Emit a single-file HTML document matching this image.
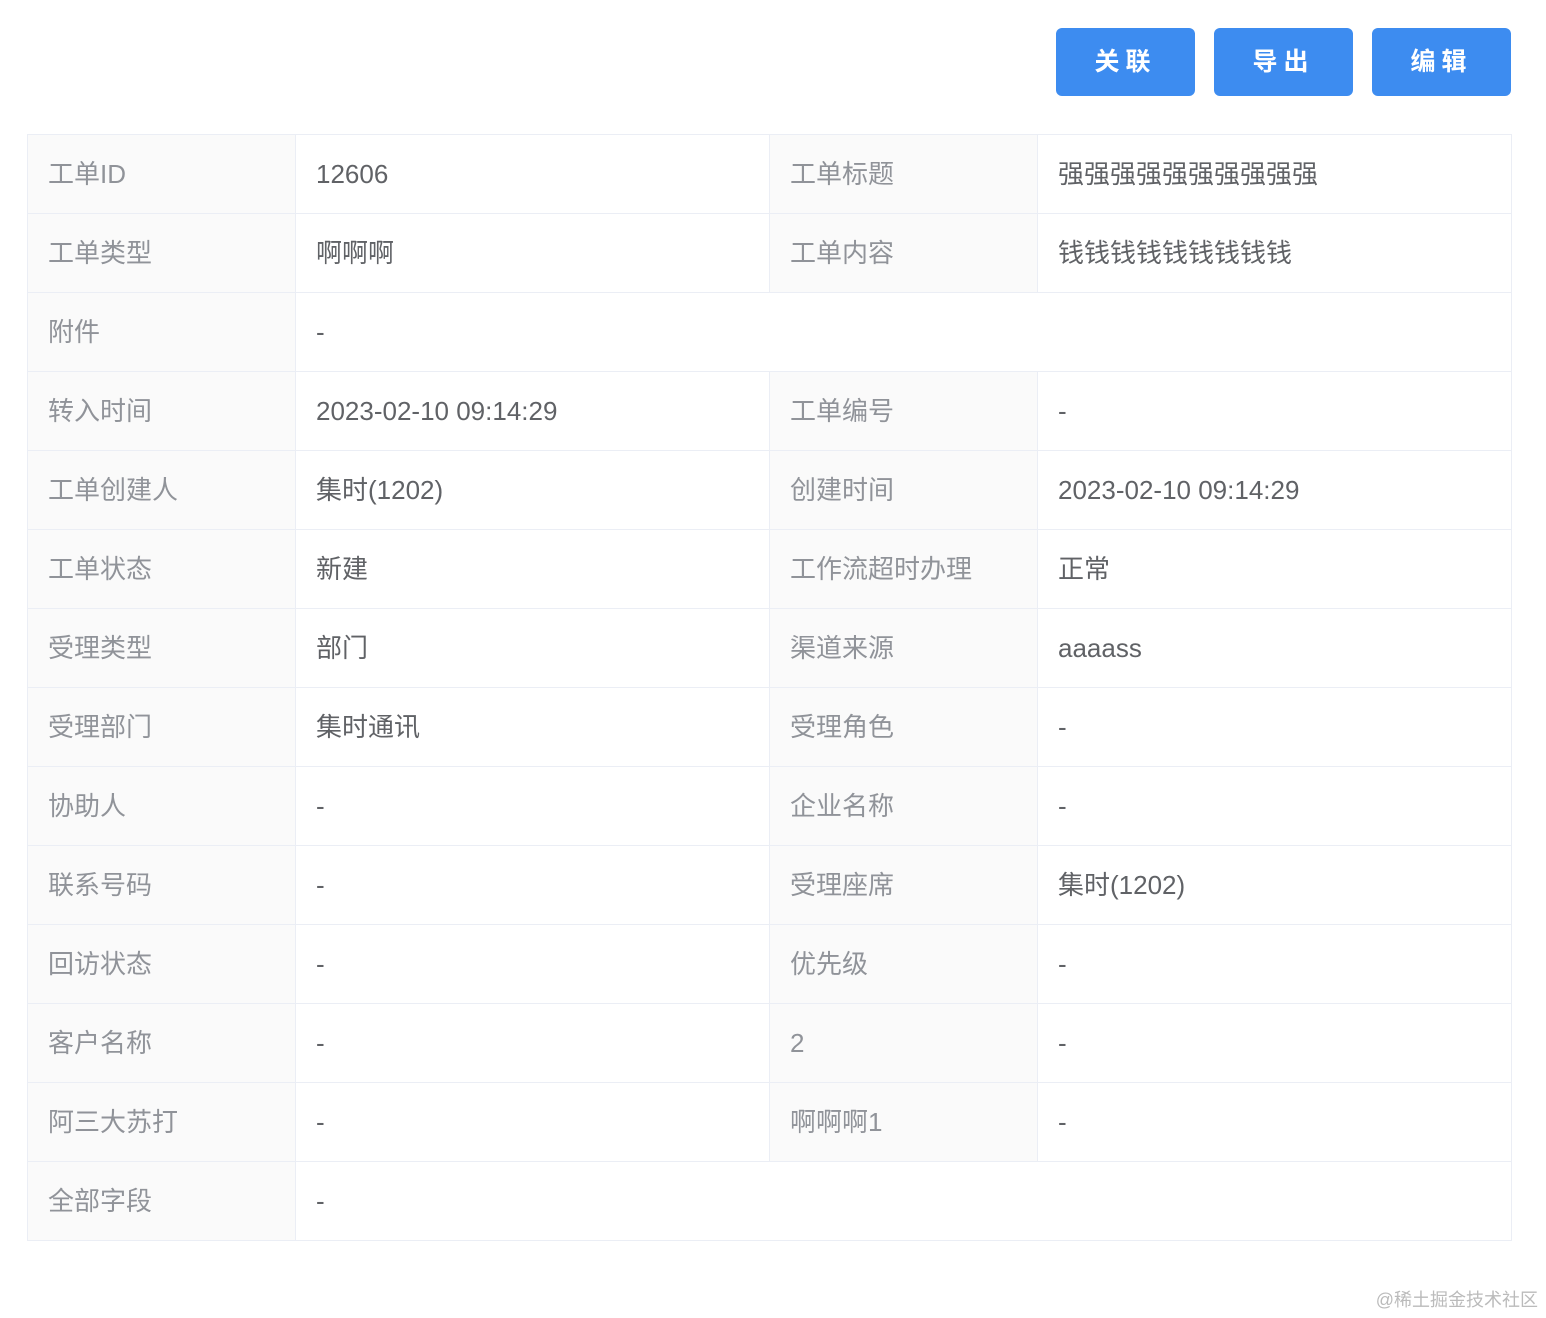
<!DOCTYPE html>
<html><head><meta charset="utf-8"><style>
body{margin:0;background:#fff;width:1546px;height:1318px;position:relative;overflow:hidden;font-family:"Liberation Sans","Noto Sans CJK SC",sans-serif}
.btn{position:absolute;top:28px;width:139px;height:68px;background:#3d8cf0;border-radius:6px;color:#fff;font-size:25px;line-height:68px;text-align:center;letter-spacing:6px;font-weight:bold}
table{position:absolute;left:27px;top:134px;border-collapse:collapse;table-layout:fixed;width:1484px}
td{height:78px;line-height:78px;border:1px solid #ebeef5;padding:0 0 0 20px;font-size:26px;color:#606266;white-space:nowrap;overflow:hidden;vertical-align:top}
td.l{background:#fafafa;color:#909399}
.wm{position:absolute;right:8px;bottom:6px;font-size:18px;color:#bbb}
</style></head><body>
<div class="btn" style="left:1056px">关联</div>
<div class="btn" style="left:1214px">导出</div>
<div class="btn" style="left:1372px">编辑</div>
<table>
<colgroup><col style="width:268px"><col style="width:474px"><col style="width:268px"><col style="width:474px"></colgroup>
<tr><td class="l">工单ID</td><td>12606</td><td class="l">工单标题</td><td>强强强强强强强强强强</td></tr>
<tr><td class="l">工单类型</td><td>啊啊啊</td><td class="l">工单内容</td><td>钱钱钱钱钱钱钱钱钱</td></tr>
<tr><td class="l">附件</td><td colspan="3">-</td></tr>
<tr><td class="l">转入时间</td><td>2023-02-10 09:14:29</td><td class="l">工单编号</td><td>-</td></tr>
<tr><td class="l">工单创建人</td><td>集时(1202)</td><td class="l">创建时间</td><td>2023-02-10 09:14:29</td></tr>
<tr><td class="l">工单状态</td><td>新建</td><td class="l">工作流超时办理</td><td>正常</td></tr>
<tr><td class="l">受理类型</td><td>部门</td><td class="l">渠道来源</td><td>aaaass</td></tr>
<tr><td class="l">受理部门</td><td>集时通讯</td><td class="l">受理角色</td><td>-</td></tr>
<tr><td class="l">协助人</td><td>-</td><td class="l">企业名称</td><td>-</td></tr>
<tr><td class="l">联系号码</td><td>-</td><td class="l">受理座席</td><td>集时(1202)</td></tr>
<tr><td class="l">回访状态</td><td>-</td><td class="l">优先级</td><td>-</td></tr>
<tr><td class="l">客户名称</td><td>-</td><td class="l">2</td><td>-</td></tr>
<tr><td class="l">阿三大苏打</td><td>-</td><td class="l">啊啊啊1</td><td>-</td></tr>
<tr><td class="l">全部字段</td><td colspan="3">-</td></tr>
</table>
<div class="wm">@稀土掘金技术社区</div>
</body></html>
